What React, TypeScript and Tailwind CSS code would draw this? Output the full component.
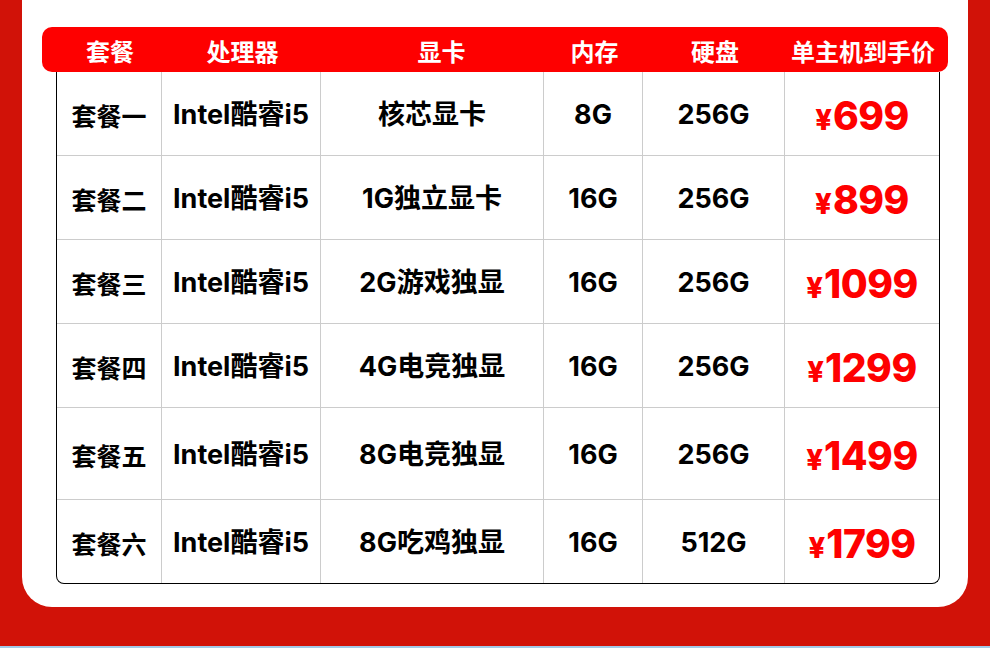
import React from "react";

const cols = [105, 159, 223, 99, 142, 154];

const rows = [
  { name: "套餐一", cpu: "Intel酷睿i5", gpu: "核芯显卡", mem: "8G", disk: "256G", price: "699", h: 84 },
  { name: "套餐二", cpu: "Intel酷睿i5", gpu: "1G独立显卡", mem: "16G", disk: "256G", price: "899", h: 84 },
  { name: "套餐三", cpu: "Intel酷睿i5", gpu: "2G游戏独显", mem: "16G", disk: "256G", price: "1099", h: 84 },
  { name: "套餐四", cpu: "Intel酷睿i5", gpu: "4G电竞独显", mem: "16G", disk: "256G", price: "1299", h: 84 },
  { name: "套餐五", cpu: "Intel酷睿i5", gpu: "8G电竞独显", mem: "16G", disk: "256G", price: "1499", h: 92 },
  { name: "套餐六", cpu: "Intel酷睿i5", gpu: "8G吃鸡独显", mem: "16G", disk: "512G", price: "1799", h: 83 },
];

const headers = ["套餐", "处理器", "显卡", "内存", "硬盘", "单主机到手价"];

export default function App() {
  return (
    <div
      className="w-[990px] h-[648px] bg-[#d11208] flex flex-col overflow-hidden"
      style={{ fontFamily: 'Inter, "Noto Sans CJK SC", sans-serif' }}
    >
      <div className="mx-[22px] h-[607px] bg-white rounded-b-[30px] pt-[27px] px-[20px] shrink-0">
        <div className="h-[45px] bg-[#fe0000] rounded-[10px] flex pl-[15px] text-white font-bold text-[24px]">
          {headers.map((h, i) => (
            <div
              key={h}
              className={`flex items-center justify-center pt-[2px] ${i === 2 ? "pl-[16px]" : ""}`}
              style={{ width: cols[i] + (i === 0 ? 1 : 0) }}
            >
              <span style={{ fontFamily: '"Noto Sans CJK SC", sans-serif' }}>{h}</span>
            </div>
          ))}
        </div>
        <div className="ml-[14px] w-[884px] border-x border-b border-black rounded-b-[8px] overflow-hidden">
          {rows.map((r, ri) => (
            <div
              key={r.name}
              className={`flex ${ri < rows.length - 1 ? "border-b border-[#cccccc]" : ""}`}
              style={{ height: r.h }}
            >
              <Cell w={cols[0]}>
                <span className="text-[25px]" style={{ fontFamily: '"Noto Sans CJK SC", sans-serif' }}>{r.name}</span>
              </Cell>
              <Cell w={cols[1]}>
                <span className="text-[27px]">{r.cpu}</span>
              </Cell>
              <Cell w={cols[2]}>
                <span className="text-[27px]">{r.gpu}</span>
              </Cell>
              <Cell w={cols[3]}>
                <span className="text-[27px]">{r.mem}</span>
              </Cell>
              <Cell w={cols[4]}>
                <span className="text-[27px]">{r.disk}</span>
              </Cell>
              <Cell w={cols[5]} last>
                <span className="text-[#fe0000] flex items-baseline leading-none font-extrabold">
                  <span className="text-[29px] mr-[1px]">¥</span>
                  <span className="text-[39px] tracking-[-0.5px]">{r.price}</span>
                </span>
              </Cell>
            </div>
          ))}
        </div>
      </div>
      <div className="flex-1" />
      <div className="h-[2px] bg-[#a3c9e8] shrink-0" />
    </div>
  );
}

function Cell({ w, last, children }: { w: number; last?: boolean; children: React.ReactNode }) {
  return (
    <div
      className={`flex items-center justify-center font-bold text-black shrink-0 pt-[4px] ${last ? "" : "border-r border-[#cccccc]"}`}
      style={{ width: w }}
    >
      {children}
    </div>
  );
}
